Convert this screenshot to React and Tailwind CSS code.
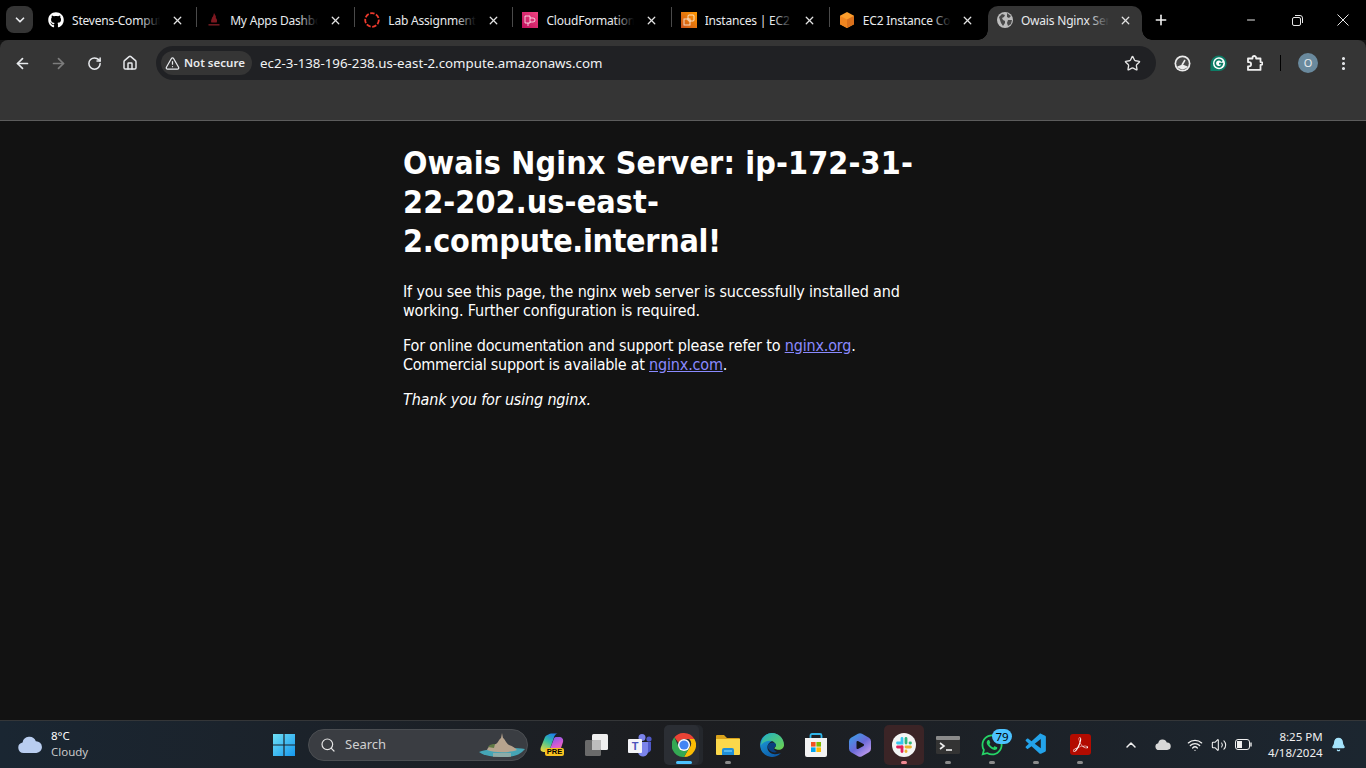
import React from "react";
import { FaGithub, FaWhatsapp } from "react-icons/fa";
import { VscVscode } from "react-icons/vsc";
import { SiAdobeacrobatreader } from "react-icons/si";
import { ArrowLeft, ArrowRight, RotateCw, Home, TriangleAlert, Star, EllipsisVertical, ChevronDown, ChevronUp, Plus, X, Minus, Wifi, Volume2, Search, Bell } from "lucide-react";

const ui = "font-['Noto_Sans','Open_Sans',sans-serif]";

const Globe = () => (
  <svg width="16" height="16" viewBox="0 0 16 16"><circle cx="8" cy="8" r="8" fill="#bdbdbd" /><path d="M2 5l3-3 3 1-1 2-2 1 1 2 2 1v2l-2 3-2-3-1-3zM10 1l4 3-2 2-2-1zM11 8h4l-1 4-3 2-1-3z" fill="#4a4a4a" /></svg>
);
const Steven = () => (
  <svg width="16" height="16" viewBox="0 0 16 16"><path d="M8 1c.8 2 2.6 3 1.8 5 1 1 1.8 2.4.9 4.5H5.3C4.4 8.5 6 7 6.2 5.2 7.2 5 7.4 3 8 1z" fill="#7e1820" /><rect x="2.5" y="12" width="11" height="1.6" fill="#6d1a20" /></svg>
);
const RedRing = () => (
  <svg width="16" height="16" viewBox="0 0 16 16"><circle cx="8" cy="8" r="6.8" fill="none" stroke="#ee3a2d" strokeWidth="1.8" strokeDasharray="4.4 1.6" /></svg>
);
const CfIcon = () => (
  <svg width="16" height="16" viewBox="0 0 16 16"><defs><linearGradient id="cf" x1="0" y1="1" x2="1" y2="0"><stop offset="0" stopColor="#bd0f5c" /><stop offset="1" stopColor="#f34482" /></linearGradient></defs><rect width="16" height="16" fill="url(#cf)" /><path d="M3 4h5v7H3zM8 6h3a2 2 0 0 1 0 4H8M6 11v3" fill="none" stroke="#fff" strokeOpacity=".75" /></svg>
);
const Ec2Icon = () => (
  <svg width="16" height="16" viewBox="0 0 16 16"><defs><linearGradient id="ec" x1="0" y1="1" x2="1" y2="0"><stop offset="0" stopColor="#c8511b" /><stop offset="1" stopColor="#ff9900" /></linearGradient></defs><rect width="16" height="16" fill="url(#ec)" /><rect x="3" y="7" width="6" height="6" fill="none" stroke="#fff" strokeOpacity=".75" /><rect x="7" y="3" width="6" height="6" rx="1" fill="none" stroke="#fff" strokeOpacity=".75" /></svg>
);
const Cube = () => (
  <svg width="16" height="16" viewBox="0 0 16 16"><path d="M8 0l7 3.8v8.4L8 16l-7-3.8V3.8z" fill="#fb9d2c" /><path d="M1 3.8L8 7.6V16l-7-3.8z" fill="#f08520" /><path d="M15 3.8L8 7.6V16l7-3.8z" fill="#d9701c" /></svg>
);

const tabs = [
  { title: "Stevens-Computer-Science", icon: <FaGithub size={16} color="#fff" /> },
  { title: "My Apps Dashboard", icon: <Steven /> },
  { title: "Lab Assignment 3", icon: <RedRing /> },
  { title: "CloudFormation - Stacks", icon: <CfIcon /> },
  { title: "Instances | EC2 | us-east", icon: <Ec2Icon /> },
  { title: "EC2 Instance Connect", icon: <Cube /> },
];

function Tab({ title, icon, active, last }) {
  return (
    <div className="relative w-[158.17px] h-[34px] flex items-center pl-[9px] pb-[6px] shrink-0">
      {active && (
        <>
          <span className="absolute left-0 right-[4px] top-0 bottom-0 bg-[#353535] rounded-t-[10px]" />
          <span className="absolute -left-[10px] bottom-0 w-[10px] h-[10px] bg-[radial-gradient(circle_at_0_0,#000_9.5px,#353535_10px)]" />
          <span className="absolute right-[-6px] bottom-0 w-[10px] h-[10px] bg-[radial-gradient(circle_at_100%_0,#000_9.5px,#353535_10px)]" />
        </>
      )}
      <span className="relative w-4 h-4 shrink-0 flex items-center justify-center">{icon}</span>
      <div className="relative ml-2 mt-[2px] w-[88px] overflow-hidden whitespace-nowrap text-[12px] leading-[16px] tracking-[-0.2px] text-[#e8eaed]">
        {title}
        <span className={`absolute right-0 top-0 bottom-0 w-5 bg-linear-to-r from-transparent ${active ? "to-[#353535]" : "to-black"}`} />
      </div>
      <X size={13} strokeWidth={2.4} color="#e3e3e3" className="relative ml-[10.5px]" />
      {!active && !last && <span className="absolute right-0 top-[1px] w-[1px] h-[20px] bg-[#4a4a4a]" />}
    </div>
  );
}

const Win = () => (
  <svg width="24" height="24" viewBox="0 0 24 24"><defs><linearGradient id="w" x1="0" y1="0" x2="1" y2="1"><stop offset="0" stopColor="#6fe0f5" /><stop offset="1" stopColor="#1597ee" /></linearGradient></defs><path fill="url(#w)" d="M1 1h10.4v10.4H1zM12.6 1H23v10.4H12.6zM1 12.6h10.4V23H1zM12.6 12.6H23V23H12.6z" /></svg>
);
const Copilot = () => (
  <div className="relative w-6 h-6">
    <svg width="24" height="22" viewBox="0 0 24 22"><defs><linearGradient id="c1" x1="0.7" y1="0" x2="0.2" y2="1"><stop offset="0" stopColor="#1f7fe8" /><stop offset=".45" stopColor="#35c0a0" /><stop offset="1" stopColor="#e8d83a" /></linearGradient><linearGradient id="c2" x1="0.3" y1="0" x2="0.8" y2="1"><stop offset="0" stopColor="#7a58f0" /><stop offset=".55" stopColor="#d85cd0" /><stop offset="1" stopColor="#f0789a" /></linearGradient></defs><path fill="url(#c1)" d="M8.5 1.5c1-.8 2-1 3.5-1h5.5c-2 .5-3 2-3.8 4.5L10 16c-.6 1.8-2 3-4 3H3.5C1 19 0 17 .7 14.8L5 4c.6-1.3 2-2 3.5-2.5z" /><path fill="url(#c2)" d="M10 16l4-10.500c.4-1 1.200-1.500 2.300-1.500H19c3 0 4.800 2 4 5l-2.300 7c-.6 2-2 3.500-4.200 3.500H7c1.500-.5 2.500-1.800 3-3.500z" /></svg>
    <span className="absolute left-[5px] top-[15px] w-[19px] h-[8px] rounded-[2px] bg-[#f8c21f] text-[7.5px] leading-[8px] font-bold text-center text-black font-['Liberation_Sans',sans-serif]">PRE</span>
  </div>
);
const TaskView = () => (
  <svg width="24" height="22" viewBox="0 0 24 22"><rect x="8" y="0" width="16" height="16" rx="1.5" fill="#efefef" /><rect x="1" y="6" width="16" height="16" rx="1.5" fill="#6a6a6a" /><path d="M9 6h8v9a1 1 0 0 1-1 1H8V7a1 1 0 0 1 1-1z" fill="#bdbdbd" /></svg>
);
const Teams = () => (
  <svg width="24" height="24" viewBox="0 0 24 24"><circle cx="14" cy="4.5" r="3.5" fill="#7b83eb" /><circle cx="21" cy="6" r="2.6" fill="#5059c9" /><path d="M17 9h6v8a4 4 0 0 1-6 2z" fill="#5059c9" /><path d="M9 9h11v9a5 5 0 0 1-10 1z" fill="#7b83eb" /><rect x="0" y="6" width="14" height="14" rx="1" fill="#f4f4f8" /><text x="7" y="17" fontSize="11" fontWeight="700" textAnchor="middle" fill="#4b53bc" fontFamily="Liberation Sans">T</text></svg>
);
const Chrome = () => (
  <svg width="24" height="24" viewBox="0 0 24 24"><path d="M12 0a12 12 0 0 1 10.4 6H12a6 6 0 0 0-5.6 3.8L2.4 4.3A12 12 0 0 1 12 0z" fill="#ea4335" /><path d="M22.4 6A12 12 0 0 1 12 24l5.2-9a6 6 0 0 0 0-9z" fill="#fbbc04" /><path d="M12 24A12 12 0 0 1 2.4 4.3L7.2 15A6 6 0 0 0 12 18l5.2-3z" fill="#34a853" /><circle cx="12" cy="12" r="6" fill="#fff" /><circle cx="12" cy="12" r="4.6" fill="#4285f4" /></svg>
);
const Folder = () => (
  <svg width="24" height="22" viewBox="0 0 24 22"><path d="M0 2a1 1 0 0 1 1-1h7l3 3h12a1 1 0 0 1 1 1v4H0z" fill="#d9a21b" /><path d="M0 5h24v15a1 1 0 0 1-1 1H1a1 1 0 0 1-1-1z" fill="#fbd84b" /><path d="M6 21v-5a2 2 0 0 1 2-2h8a2 2 0 0 1 2 2v5z" fill="#1f8fd8" /><rect x="8" y="16" width="8" height="2" fill="#53b8f0" /></svg>
);
const Edge = () => (
  <svg width="24" height="24" viewBox="0 0 24 24"><defs><linearGradient id="e0" x1="0" y1="0" x2="0.6" y2="1"><stop offset="0" stopColor="#1fa6e0" /><stop offset="1" stopColor="#0c5aa8" /></linearGradient><linearGradient id="e1" x1="0" y1="0" x2="1" y2="1"><stop offset="0" stopColor="#1fb0c8" /><stop offset="1" stopColor="#6fd34a" /></linearGradient></defs><path d="M12 0A12 12 0 1 0 21 20c-2 1-5 1.5-7.5 1-4-.8-6.5-4-6-7.5C8 10 11 8 14 8c3 0 5 2.5 5 5h4.9C24 5 18 0 12 0z" fill="url(#e0)" /><path d="M12 0c6.5 0 12 5 12 12 0 3-2.5 4.8-5 4.8-2 0-4-.6-5-1.8 1.2-.5 2-1.500 1.8-3-.4-2.500-3-4.500-6.500-4.300C5.500 8 2 10 .9 12.500 1.500 5 6 0 12 0z" fill="url(#e1)" /><path d="M7.500 13.500C8 10.500 11 9 13.500 9.500c2 .4 2.800 2 2.500 3-.3 1-1.200 1.600-2 2-.8 1.500.6 3.500 3 4.500-4 1.500-8.500-1-9.500-5.500z" fill="#0a3f7e" /></svg>
);
const Store = () => (
  <svg width="24" height="24" viewBox="0 0 24 24"><path d="M6.5 7V2.5A1.5 1.5 0 0 1 8 1h8a1.5 1.5 0 0 1 1.5 1.5V7" fill="none" stroke="#2fb4e8" strokeWidth="1.8" /><path d="M1 5h22v17a2 2 0 0 1-2 2H3a2 2 0 0 1-2-2z" fill="#f2f2f2" /><path fill="#f25022" d="M7 9h4.6v4.6H7z" /><path fill="#7fba00" d="M12.4 9H17v4.6h-4.6z" /><path fill="#00a4ef" d="M7 14.4h4.6V19H7z" /><path fill="#ffb900" d="M12.4 14.4H17V19h-4.6z" /></svg>
);
const Hex = () => (
  <svg width="22" height="24" viewBox="0 0 22 24"><defs><linearGradient id="h" x1="0.1" y1="0" x2="0.9" y2="1"><stop offset="0" stopColor="#3aa0e8" /><stop offset=".5" stopColor="#6a6ad8" /><stop offset="1" stopColor="#d0a4f0" /></linearGradient></defs><path fill="url(#h)" d="M9 .8a4 4 0 0 1 4 0l7 4A4 4 0 0 1 22 8.200v7.600a4 4 0 0 1-2 3.400l-7 4a4 4 0 0 1-4 0l-7-4a4 4 0 0 1-2-3.400V8.200a4 4 0 0 1 2-3.400z" /><path d="M8.500 9l5.500 3-5.500 3z" fill="#14161c" stroke="#14161c" strokeWidth="2" strokeLinejoin="round" /></svg>
);
const Slack = () => (
  <svg width="24" height="24" viewBox="0 0 24 24"><circle cx="12" cy="12" r="12" fill="#f4f4f4" /><g strokeWidth="2.8" strokeLinecap="round" fill="none"><path d="M10 5.5V10H5.5" stroke="#36c5f0" /><path d="M14 5.5V10" stroke="#2eb67d" /><path d="M18.5 10H18" stroke="#2eb67d" /><path d="M14 14h4.5" stroke="#ecb22e" /><path d="M14 18.5V18" stroke="#ecb22e" /><path d="M10 14v4.5" stroke="#e01e5a" /><path d="M5.5 14H10" stroke="#e01e5a" /></g></svg>
);
const Terminal = () => (
  <svg width="24" height="20" viewBox="0 0 24 20"><rect width="24" height="18" y="1" rx="1.5" fill="#333" /><rect width="24" height="4" y="1" rx="1" fill="#8a8a8a" /><path d="M4 8l4 3-4 3" fill="none" stroke="#eee" strokeWidth="1.6" /><path d="M10 15h6" stroke="#eee" strokeWidth="1.6" /></svg>
);
const Acrobat = () => (
  <div className="w-[21px] h-[21px] rounded-[3px] bg-[#b30b00] flex items-center justify-center"><SiAdobeacrobatreader size={15} color="#fff" /></div>
);
const Cloud = ({ w = 22, h = 16, fill = "#b9cdf0" }) => (
  <svg width={w} height={h} viewBox="0 0 22 16"><path d="M5 16a5 5 0 0 1-1-9.9A6.5 6.5 0 0 1 16.5 5 5.5 5.5 0 0 1 17 16z" fill={fill} /></svg>
);

function Cell({ children, dot, bg }) {
  return (
    <div className="relative w-[44px] h-[48px] flex items-center justify-center shrink-0">
      {bg}
      <span className="relative">{children}</span>
      {dot && <span className={`absolute bottom-[5px] h-[3px] rounded-full ${dot}`} />}
    </div>
  );
}

export default function App() {
  return (
    <div className={`w-[1366px] h-[768px] overflow-hidden flex flex-col bg-[#121212] ${ui}`}>
      {/* Tab strip */}
      <div className="h-10 bg-black flex items-end shrink-0 relative">
        <div className="w-[27px] h-[27px] ml-[6px] mb-[7px] mr-[6px] rounded-lg bg-[#353535] flex items-center justify-center shrink-0">
          <ChevronDown size={14} strokeWidth={3} color="#e8eaed" />
        </div>
        <div className="flex items-end">
          {tabs.map((t, i) => <Tab key={i} {...t} last={i === 5} />)}
          <Tab title="Owais Nginx Server" icon={<Globe />} active />
        </div>
        <Plus size={16} strokeWidth={2.4} color="#f1f1f1" className="ml-[7px] mb-[12px]" />
        <div className="ml-auto flex items-center h-10 self-start">
          <div className="w-[46px] flex justify-center"><Minus size={12} color="#e8e8e8" /></div>
          <div className="w-[46px] flex justify-center">
            <svg width="11" height="11" viewBox="0 0 11 11" fill="none" stroke="#e8e8e8"><rect x=".5" y="2.5" width="8" height="8" rx="1.5" /><path d="M3 .5h5A2.500 2.500 0 0 1 10.500 3v5" /></svg>
          </div>
          <div className="w-[46px] flex justify-center">
            <svg width="12" height="12" viewBox="0 0 12 12" stroke="#e8e8e8"><path d="M.5.5l11 11M11.5.5l-11 11" /></svg>
          </div>
        </div>
      </div>

      {/* Toolbar */}
      <div className="h-[81px] shrink-0 bg-[#353535] rounded-t-[8px] border-b border-[#5c5c5c] pt-[6px] flex items-start">
        <div className="flex items-center h-[34px] pl-[4px]">
          <div className="w-9 flex justify-center"><ArrowLeft size={17} strokeWidth={2.4} color="#e8eaed" /></div>
          <div className="w-9 flex justify-center"><ArrowRight size={17} strokeWidth={2.4} color="#7d7d7d" /></div>
          <div className="w-9 flex justify-center"><RotateCw size={15} strokeWidth={2.4} color="#e8eaed" /></div>
          <div className="w-9 flex justify-center"><Home size={16} strokeWidth={2.2} color="#e8eaed" /></div>
        </div>
        <div className="ml-[8px] w-[1000px] h-[34px] rounded-full bg-[#202124] flex items-center pl-[5px] pr-[15px]">
          <div className="h-6 w-[91px] rounded-full bg-[#353535] flex items-center pl-[4px] gap-[4px] text-[11.5px] font-semibold text-[#e8eaed] whitespace-nowrap">
            <TriangleAlert size={15} strokeWidth={2} color="#e8eaed" />
            <span>Not secure</span>
          </div>
          <span className="ml-2 text-[13.3px] leading-[18px] text-[#f1f3f4] whitespace-nowrap">ec2-3-138-196-238.us-east-2.compute.amazonaws.com</span>
          <Star size={17} strokeWidth={1.9} color="#e3e3e3" className="ml-auto" />
        </div>
        <div className="flex items-center h-[34px] ml-[8px]">
          <div className="w-9 flex justify-center">
            <svg width="17" height="17" viewBox="0 0 17 17"><circle cx="8.5" cy="8.5" r="8" fill="#ececec" /><circle cx="8.5" cy="8.5" r="6.3" fill="#4a4a4a" /><path d="M3.2 11.5A6.3 6.3 0 0 0 13.8 11.5L8.5 9.5z" fill="#ececec" /><path d="M8 10l3-5" stroke="#ececec" strokeWidth="1.5" /></svg>
          </div>
          <div className="w-9 flex justify-center">
            <svg width="17" height="17" viewBox="0 0 17 17"><path d="M9 .5a7.8 7.8 0 0 1 0 15.6H.5V9A8.5 8.5 0 0 1 9 .5z" fill="#0d7c66" /><circle cx="9" cy="8.3" r="6" fill="#fff" /><path d="M12 6.500a3.600 3.600 0 1 0 .4 2.200H9" fill="none" stroke="#0d7c66" strokeWidth="1.7" /></svg>
          </div>
          <div className="w-9 flex justify-center">
            <svg width="17" height="17" viewBox="0 0 17 17" fill="none" stroke="#f0f0f0" strokeWidth="1.8" strokeLinejoin="round"><path d="M2 3.5h4.5v-.7a1.8 1.8 0 0 1 3.6 0v.7h4.4v3.6h.6a1.4 1.4 0 0 1 0 2.800h-.6v5H2v-3.600h1a2 2 0 0 0 0-4.200H2z" /></svg>
          </div>
          <span className="w-[1px] h-[16px] bg-black ml-[8px] mr-[9px]" />
          <div className="w-9 flex justify-center">
            <span className="w-5 h-5 rounded-full bg-[#6a8a9e] text-[#e8eaed] text-[11px] flex items-center justify-center">O</span>
          </div>
          <div className="w-[34px] flex justify-center"><EllipsisVertical size={17} strokeWidth={2.4} color="#e8eaed" /></div>
        </div>
      </div>

      {/* Page */}
      <main className="flex-1 bg-[#121212] text-white font-['DejaVu_Sans_Condensed','DejaVu_Sans',sans-serif] text-[16px] leading-[19px] pt-[23px] tracking-[-0.16px]">
        <div className="w-[560px] mx-auto">
          <h1 className="text-[32px] leading-[39px] font-bold mb-[21px]">
            <span className="tracking-[0.13px]">Owais Nginx Server: ip-172-31-</span><br />
            <span className="tracking-[0.1px]">22-202.us-east-</span><br />
            <span className="tracking-[-0.32px]">2.compute.internal!</span>
          </h1>
          <p className="mb-4">If you see this page, the nginx web server is successfully installed and<br />working. Further configuration is required.</p>
          <p className="mb-4">For online documentation and support please refer to <a href="#" className="underline text-[#8a8aff]">nginx.org</a>.<br /><span className="tracking-[-0.26px]">Commercial support is available at </span><a href="#" className="underline text-[#8a8aff]">nginx.com</a>.</p>
          <p><em>Thank you for using nginx.</em></p>
        </div>
      </main>

      {/* Taskbar */}
      <div className="h-[48px] shrink-0 border-t border-[#343638] bg-linear-to-r from-[#1a2632] via-[#1c1d20] to-[#1c2630] flex items-center relative">
        <div className="flex items-center w-[262px] pl-[18px] gap-[9px] shrink-0">
          <Cloud w={24} h={17} />
          <div className="text-[11.5px] leading-[16px] text-white pb-[2px]">
            <div>8°C</div>
            <div className="text-[#c8c8c8]">Cloudy</div>
          </div>
        </div>
        <Cell><Win /></Cell>
        <div className="mx-[2px] w-[220px] h-8 rounded-full bg-[#3a3d42] border border-[#4b4e52] flex items-center pl-[11px] shrink-0 overflow-hidden relative">
          <Search size={16} strokeWidth={1.8} color="#e4e4e4" />
          <span className="ml-[9px] text-[13px] text-[#d0d0d0]">Search</span>
          <svg className="absolute right-[2px] top-[3px]" width="46" height="26" viewBox="0 0 46 26">
            <path d="M0 19c10-4 34-5 46-3-4 5-10 8-20 8C14 24 5 23 0 19z" fill="#45a5b5" />
            <path d="M8 17c2-5 6-5 9-6 2-1 3-5 5-6l1-5 1 5c2 1 3 5 6 7 4 1 6 3 8 5-8 3-22 3-30 0z" fill="#b7a48e" />
            <path d="M9 14c2-3 5-3 7-3l-1 4z" fill="#5f7a45" />
            <path d="M14 20h18v4H14z" fill="#c7b29c" fillOpacity=".55" />
          </svg>
        </div>
        <Cell><Copilot /></Cell>
        <Cell><TaskView /></Cell>
        <Cell><Teams /></Cell>
        <Cell dot="w-[16px] bg-[#4cc2ff]" bg={<span className="absolute left-[2px] top-[4px] w-[35px] h-[40px] rounded-[5px] bg-[#2b2e34] shadow-[4px_0_0_#24272c]" />}><Chrome /></Cell>
        <Cell dot="w-[6px] bg-[#8b8b8b]"><Folder /></Cell>
        <Cell><Edge /></Cell>
        <Cell><Store /></Cell>
        <Cell><Hex /></Cell>
        <Cell dot="w-[6px] bg-[#f08a94]" bg={<span className="absolute left-[2px] top-[4px] w-[40px] h-[40px] rounded-[5px] bg-[#3b2426]" />}><Slack /></Cell>
        <Cell dot="w-[6px] bg-[#8b8b8b]"><Terminal /></Cell>
        <Cell dot="w-[6px] bg-[#8b8b8b]">
          <FaWhatsapp size={24} color="#25d366" />
          <span className="absolute left-[12px] -top-[4px] w-[20px] h-[15px] rounded-full bg-[#4cc2ff] text-black text-[11.5px] leading-[15px] text-center">79</span>
        </Cell>
        <Cell dot="w-[6px] bg-[#8b8b8b]"><VscVscode size={25} color="#23a3ea" /></Cell>
        <Cell dot="w-[6px] bg-[#8b8b8b]"><Acrobat /></Cell>
        <div className="flex items-center ml-[21px]">
          <ChevronUp size={16} strokeWidth={2.2} color="#f0f0f0" />
          <span className="ml-[16px]"><Cloud w={16} h={11} fill="#d8d8d8" /></span>
          <Wifi size={16} strokeWidth={2} color="#f0f0f0" className="ml-[16px]" />
          <Volume2 size={16} strokeWidth={1.6} color="#f0f0f0" className="ml-[8px]" />
          <svg className="ml-[8px]" width="17" height="11" viewBox="0 0 17 11" fill="none" stroke="#f0f0f0"><rect x=".5" y=".5" width="14" height="10" rx="2.5" /><rect x="2" y="2" width="5" height="7" fill="#f0f0f0" stroke="none" /><path d="M16 3.5v4" strokeWidth="1.4" /></svg>
          <div className="ml-[16px] text-right text-[11.5px] leading-[16px] text-[#f0f0f0] whitespace-nowrap">
            <div>8:25 PM</div>
            <div>4/18/2024</div>
          </div>
          <Bell size={15} fill="#a5e3fb" color="#a5e3fb" className="ml-[8px]" />
        </div>
      </div>
    </div>
  );
}
